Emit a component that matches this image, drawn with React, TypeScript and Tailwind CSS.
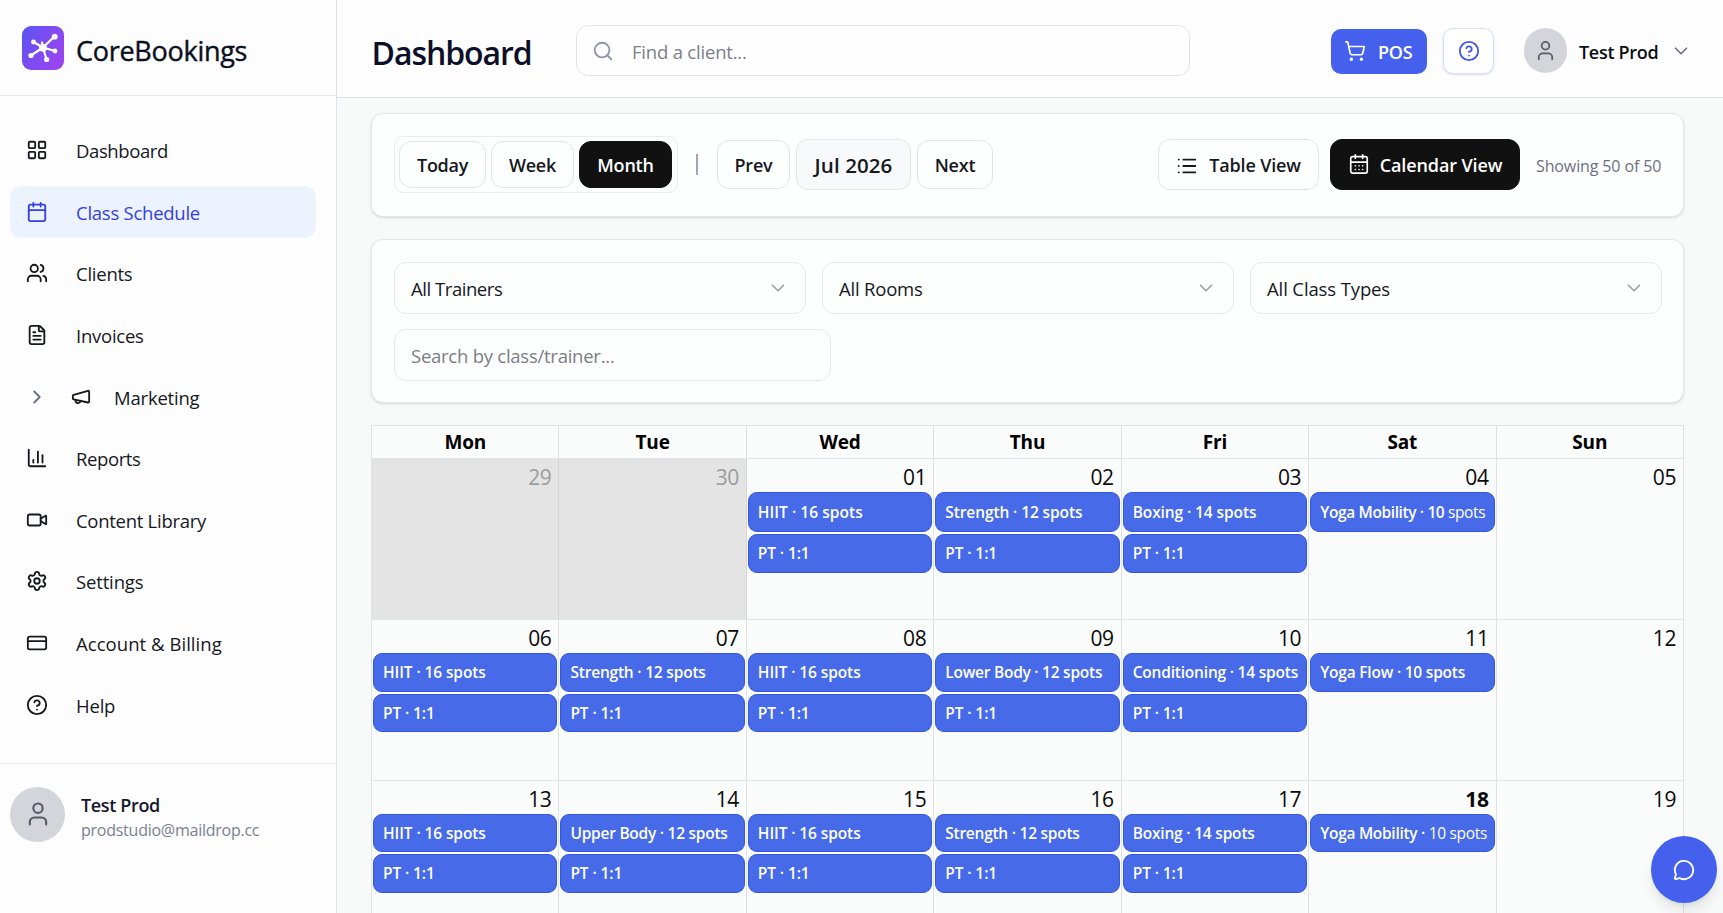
import React from "react";
import {
  LayoutGrid, Calendar, Users, FileText, ChevronRight, BarChart3, Video, Settings, CreditCard,
  HelpCircle, User, Search, ShoppingCart, ChevronDown, List, CalendarDays, MessageCircle,
} from "lucide-react";

function Megaphone({ className }: { className?: string; strokeWidth?: number }) {
  return (
    <svg className={className} viewBox="0 0 24 24" fill="none" stroke="currentColor" strokeWidth="2" strokeLinecap="round" strokeLinejoin="round">
      <path d="M4 9.8 19.6 5.2a1 1 0 0 1 1.3 1V17a1 1 0 0 1-1.3 1L4 14.6a1 1 0 0 1-.9-1v-2.8a1 1 0 0 1 .9-1z" />
      <path d="M11.4 16.6a2.8 2.8 0 1 1-5.4-1.5" />
    </svg>
  );
}

const nav = [
  { label: "Dashboard", icon: LayoutGrid, cls: "tracking-[-0.4px]" },
  { label: "Class Schedule", icon: Calendar, cls: "tracking-[-0.25px]", active: true },
  { label: "Clients", icon: Users, cls: "tracking-[-0.25px]" },
  { label: "Invoices", icon: FileText, cls: "tracking-[-0.25px]" },
  { label: "Marketing", icon: Megaphone, cls: "tracking-[-0.2px]", nested: true },
  { label: "Reports", icon: BarChart3, cls: "tracking-[-0.4px]" },
  { label: "Content Library", icon: Video, cls: "tracking-[-0.28px]" },
  { label: "Settings", icon: Settings, cls: "tracking-[-0.15px]" },
  { label: "Account & Billing", icon: CreditCard, cls: "tracking-[0.05px]" },
  { label: "Help", icon: HelpCircle, cls: "tracking-[-0.2px]" },
];

type Event = { label: string; light?: string; cls?: string };
type Day = { n: string; events?: Event[]; muted?: boolean; today?: boolean };

const pt: Event = { label: "PT · 1:1", cls: "tracking-[-0.1px]" };
const hiit: Event = { label: "HIIT · 16 spots", cls: "tracking-[-0.1px]" };

const weeks: Day[][] = [
  [
    { n: "29", muted: true },
    { n: "30", muted: true },
    { n: "01", events: [{ label: "HIIT · 16 spots", cls: "tracking-[0.05px]" }, pt] },
    { n: "02", events: [{ label: "Strength · 12 spots", cls: "tracking-[-0.1px]" }, pt] },
    { n: "03", events: [{ label: "Boxing · 14 spots", cls: "tracking-[-0.1px]" }, pt] },
    { n: "04", events: [{ label: "Yoga Mobility · 10", light: " spots", cls: "tracking-[-0.38px]" }] },
    { n: "05" },
  ],
  [
    { n: "06", events: [hiit, pt] },
    { n: "07", events: [{ label: "Strength · 12 spots", cls: "tracking-[-0.2px]" }, pt] },
    { n: "08", events: [hiit, pt] },
    { n: "09", events: [{ label: "Lower Body · 12 spots", cls: "tracking-[-0.25px]" }, pt] },
    { n: "10", events: [{ label: "Conditioning · 14 spots", cls: "tracking-[-0.2px]" }, pt] },
    { n: "11", events: [{ label: "Yoga Flow · 10 spots", cls: "tracking-[-0.22px]" }] },
    { n: "12" },
  ],
  [
    { n: "13", events: [hiit, pt] },
    { n: "14", events: [{ label: "Upper Body · 12 spots", cls: "tracking-[-0.25px]" }, pt] },
    { n: "15", events: [hiit, pt] },
    { n: "16", events: [{ label: "Strength · 12 spots", cls: "tracking-[-0.25px]" }, pt] },
    { n: "17", events: [{ label: "Boxing · 14 spots", cls: "tracking-[-0.2px]" }, pt] },
    { n: "18", events: [{ label: "Yoga Mobility ·", light: " 10 spots", cls: "tracking-[-0.3px]" }], today: true },
    { n: "19" },
  ],
];

function Logo() {
  return (
    <svg className="h-11 w-[42px] shrink-0" viewBox="0 0 42 44">
      <defs>
        <linearGradient id="logo" x1="0" y1="0" x2="1" y2="0.6">
          <stop offset="0" stopColor="#5a55f3" />
          <stop offset="1" stopColor="#9844f1" />
        </linearGradient>
      </defs>
      <rect width="42" height="44" rx="9" fill="url(#logo)" />
      <g stroke="#fff" strokeWidth="2.2" strokeLinecap="round">
        <path d="M21 21.5 32.5 10.5M21 21.5 11.5 16M21 21.5 9 29.5M21 21.5 24.5 33.5M21 21.5 33 25M21 21.5 20 16.5" />
      </g>
      <g fill="#fff">
        <circle cx="32.7" cy="10.7" r="2.9" />
        <circle cx="11.5" cy="16" r="2.4" />
        <circle cx="9" cy="29.5" r="2.6" />
        <circle cx="24.7" cy="33.5" r="2.6" />
        <circle cx="33" cy="25" r="2.4" />
        <circle cx="21" cy="21.8" r="3.9" />
      </g>
    </svg>
  );
}

function Sidebar() {
  return (
    <aside className="flex w-[337px] shrink-0 flex-col border-r border-[#dfe1e8] bg-[#fdfdfe]">
      <div className="flex h-24 shrink-0 items-center gap-3 border-b border-[#e8e9ec] pl-[22px]">
        <Logo />
        <span className="pt-[7px] text-[27px] font-medium tracking-[-0.27px] text-[#0b1020] [-webkit-text-stroke:0.4px_#0b1020]">CoreBookings</span>
      </div>
      <nav className="flex flex-col gap-[9px] px-2.5 pt-7">
        {nav.map(({ label, icon: Icon, cls, active, nested }) => (
          <div
            key={label}
            className={
              "mr-[10px] flex h-[52.6px] items-center rounded-xl pl-4 " +
              (active ? "bg-[#edf2ff] text-[#3341e0]" : "text-[#16181d]")
            }
          >
            {nested && <ChevronRight className="mr-[22px] size-[22px] text-[#6b7080]" strokeWidth={2} />}
            <Icon className="size-[22px] shrink-0" strokeWidth={2} />
            <span className={(nested ? "ml-[22px] " : "ml-7 ") + "pt-0.5 text-[18.5px] leading-6 " + cls}>{label}</span>
          </div>
        ))}
      </nav>
      <div className="mt-8 flex items-start border-t border-[#e8e9ec] pt-[23px] pl-2.5">
        <div className="flex size-[55px] items-center justify-center rounded-full bg-[#d3d5da] text-[#565b6a]">
          <User className="size-7" strokeWidth={1.8} />
        </div>
        <div className="ml-4 flex flex-col pt-1.5">
          <span className="text-[18px] leading-6 font-semibold tracking-[-0.35px] text-[#14172a]">Test Prod</span>
          <span className="text-[16px] leading-[26px] tracking-[-0.25px] text-[#7b8190]">prodstudio@maildrop.cc</span>
        </div>
      </div>
    </aside>
  );
}

function Header() {
  return (
    <header className="flex h-[98px] shrink-0 items-center border-b border-[#dfe1e6] bg-[#fdfdfe]">
      <h1 className="w-[203px] shrink-0 pt-2 pl-[34.5px] text-[32px] leading-10 font-semibold tracking-[-1.05px] text-[#0b1028]">Dashboard</h1>
      <div className="mt-1 ml-9 flex h-[51.5px] w-[614px] items-center rounded-xl border border-[#e3e5e8] bg-[#fefefe] pl-[15px]">
        <Search className="size-[22px] text-[#9096a6]" strokeWidth={2} />
        <span className="ml-[18px] pt-[3px] text-[18.5px] tracking-[-0.2px] text-[#7b8088]">Find a client...</span>
      </div>
      <div className="mt-[5px] ml-[141px] flex h-[45px] w-[96px] items-center rounded-[10px] bg-[#4560ec] pl-[13px] text-white">
        <ShoppingCart className="size-[22px]" strokeWidth={1.8} />
        <span className="ml-3 pt-0.5 text-[18px] font-semibold tracking-[-0.2px]">POS</span>
      </div>
      <div className="mt-1 ml-4 flex h-[46px] w-[51px] items-center justify-center rounded-[10px] border border-[#d5e0fc] bg-white text-[#4158ea] shadow-sm">
        <HelpCircle className="size-[22px]" strokeWidth={2} />
      </div>
      <div className="mt-1 ml-[30px] flex h-[45px] w-[43px] items-center justify-center rounded-full bg-[#d3d5da] text-[#565b6a]">
        <User className="size-[23px]" strokeWidth={1.8} />
      </div>
      <span className="mt-1 ml-3 w-20 pt-[3px] text-[18px] font-semibold tracking-[-0.3px] whitespace-nowrap text-[#0b0d14]">Test Prod</span>
      <ChevronDown className="mt-1 ml-[11px] size-[22px] text-[#6b7080]" strokeWidth={1.8} />
    </header>
  );
}

const btn = "flex items-center justify-center rounded-xl border pt-0.5 font-semibold whitespace-nowrap ";

function Toolbar() {
  return (
    <section className="flex h-[104px] items-center rounded-xl border border-[#e4e6e9] bg-[#fdfefe] pr-[21px] pb-px pl-[22px] shadow-sm">
      <div className="flex h-[57px] w-[284px] items-center rounded-[10px] border border-[#eaebed] pl-[4px]">
        <div className={btn + "h-[47px] w-[87px] border-[#e3e5e8] text-[18px] tracking-[-0.3px] text-[#16181d]"}>Today</div>
        <div className={btn + "ml-[5px] h-[47px] w-[83px] border-[#e3e5e8] text-[18px] tracking-[-0.3px] text-[#16181d]"}>Week</div>
        <div className={btn + "ml-[5px] h-[47px] w-[93px] border-[#111] bg-[#111] text-[18px] tracking-[-0.2px] text-white"}>Month</div>
      </div>
      <div className="ml-[18px] h-[21px] w-0.5 bg-[#a3a6b8]" />
      <div className={btn + "ml-[19px] h-[49px] w-[73px] border-[#e3e5e8] text-[18px] tracking-[-0.2px] text-[#16181d]"}>Prev</div>
      <div className={btn + "ml-[6px] h-[51px] w-[115px] border-[#e3e5e8] bg-[#f8f9fa] text-[20.5px] tracking-[0.1px] text-[#16181d]"}>Jul 2026</div>
      <div className={btn + "ml-[6px] h-[49px] w-[76px] border-[#e3e5e8] text-[18px] tracking-[-0.2px] text-[#16181d]"}>Next</div>
      <div className={btn + "ml-auto h-[51px] w-[161px] gap-[11px] border-[#e3e5e8] text-[18px] tracking-[-0.15px] text-[#16181d]"}>
        <List className="size-[22px]" strokeWidth={2} />
        Table View
      </div>
      <div className={btn + "ml-[11px] h-[51px] w-[190px] gap-2.5 border-[#111] bg-[#111] text-[18px] tracking-[-0.1px] text-white"}>
        <CalendarDays className="mb-1 size-[22px]" strokeWidth={1.8} />
        Calendar View
      </div>
      <span className="ml-4 w-[126px] pt-0.5 text-[16px] tracking-[-0.12px] whitespace-nowrap text-[#6b7183]">Showing 50 of 50</span>
    </section>
  );
}

const selects = [
  { label: "All Trainers", cls: "tracking-[-0.45px]" },
  { label: "All Rooms", cls: "tracking-[-0.2px]" },
  { label: "All Class Types", cls: "tracking-[-0.12px]" },
];

function Filters() {
  return (
    <section className="mt-[22px] h-[164px] rounded-xl border border-[#e4e6e9] bg-[#fdfefe] pt-[22px] pr-[21px] pl-[22px] shadow-sm">
      <div className="grid grid-cols-3 gap-4">
        {selects.map((s) => (
          <div key={s.label} className="flex h-[52px] items-center justify-between rounded-xl border border-[#e6e8eb] pr-4 pl-4">
            <span className={"pt-0.5 text-[18.5px] text-[#16181d] " + s.cls}>{s.label}</span>
            <ChevronDown className="size-[22px] text-[#9aa0a8]" strokeWidth={1.8} />
          </div>
        ))}
      </div>
      <div className="mt-[15px] flex h-[52px] w-[437px] items-center rounded-xl border border-[#e6e8eb] pl-4">
        <span className="pt-0.5 text-[18.5px] tracking-[-0.25px] text-[#7b7e84]">Search by class/trainer...</span>
      </div>
    </section>
  );
}

function CalendarGrid() {
  return (
    <section className="mt-[22px] border-t border-l border-[#dfe1e3] bg-[#fafbfb]">
      <div className="grid h-[33px] grid-cols-7 border-b border-[#e2e4e6]">
        {["Mon", "Tue", "Wed", "Thu", "Fri", "Sat", "Sun"].map((d) => (
          <div key={d} className="border-r border-[#dfe1e3] pt-0.5 text-center text-[19px] leading-7 font-bold tracking-[-0.2px] text-black">{d}</div>
        ))}
      </div>
      {weeks.map((week, i) => (
        <div key={i} className={"grid grid-cols-7 border-b border-[#e2e4e6] " + (i === 0 ? "h-[161px]" : "h-[160.5px]")}>
          {week.map((d) => (
            <div key={d.n} className={"flex flex-col gap-[2px] border-r px-px " + (d.muted ? "border-[#d6d6d6] bg-[#e4e4e4]" : "border-[#dfe1e3]")}>
              <div
                className={
                  "h-[31px] pt-1 pr-1.5 text-right text-[21px] leading-7 tracking-[-0.4px] " +
                  (d.muted ? "text-[#9b9b9b]" : "text-[#0a0a0a]") + (d.today ? " font-bold" : "")
                }
              >
                {d.n}
              </div>
              {d.events?.map((e) => (
                <div
                  key={e.label}
                  className={
                    "flex items-center rounded-[9px] border border-[#3355e0] bg-[#466ae8] pt-px pl-[9px] text-[15.5px] font-semibold whitespace-pre text-white " +
                    (i === 0 ? "h-[39.5px] " : "h-[38.5px] ") + (e.cls ?? "")
                  }
                >
                  {e.label}
                  {e.light && <span className="font-normal">{e.light}</span>}
                </div>
              ))}
            </div>
          ))}
        </div>
      ))}
    </section>
  );
}

export default function App() {
  return (
    <div className="relative flex h-[913px] w-[1723px] overflow-hidden bg-[#f8f9f9] font-['Open_Sans',sans-serif]">
      <Sidebar />
      <div className="flex min-w-0 flex-1 flex-col">
        <Header />
        <main className="flex-1 overflow-hidden pt-[15px] pr-[39px] pl-[34px]">
          <Toolbar />
          <Filters />
          <CalendarGrid />
        </main>
      </div>
      <button className="absolute right-[6px] bottom-[10px] flex h-[67px] w-[66px] items-center justify-center rounded-full bg-[#4560ec] text-white shadow-lg">
        <MessageCircle className="size-[22px]" strokeWidth={2} />
      </button>
    </div>
  );
}
